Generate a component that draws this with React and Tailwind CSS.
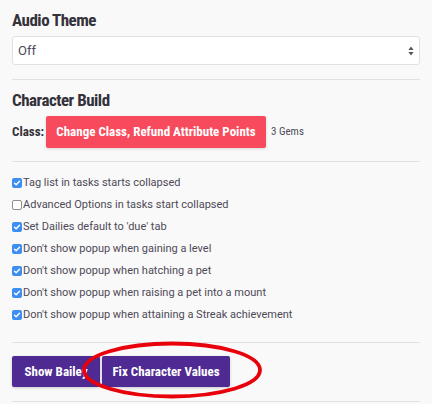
const OPTIONS = [
  { label: 'Tag list in tasks starts collapsed', checked: true },
  { label: 'Advanced Options in tasks start collapsed', checked: false },
  { label: "Set Dailies default to 'due' tab", checked: true },
  { label: "Don't show popup when gaining a level", checked: true },
  { label: "Don't show popup when hatching a pet", checked: true },
  { label: "Don't show popup when raising a pet into a mount", checked: true },
  { label: "Don't show popup when attaining a Streak achievement", checked: true },
]

function Check({ checked }) {
  if (!checked) {
    return <span className="inline-block w-[10px] h-[10px] rounded-[2px] border border-[#8e8e93] bg-white shrink-0" />
  }
  return (
    <span className="inline-flex items-center justify-center w-[10px] h-[10px] rounded-[2px] bg-[#3d8ef3] shrink-0">
      <svg width="8" height="8" viewBox="0 0 8 8">
        <path d="M1.5 4.2 L3.2 5.8 L6.5 2.2" fill="none" stroke="#fff" strokeWidth="1.4" strokeLinecap="round" strokeLinejoin="round" />
      </svg>
    </span>
  )
}

export default function App() {
  return (
    <div
      className="relative w-[432px] h-[404px] overflow-hidden bg-[#f9f9f9] px-3 pt-[9px] text-[#4e4a57]"
      style={{ fontFamily: 'Roboto, "Liberation Sans", sans-serif' }}
    >
      <h3 className="text-[17px] leading-[22px] font-bold font-stretch-condensed tracking-[-0.5px] text-[#34313a]">Audio Theme</h3>
      <div className="mt-[5px] h-[29px] flex items-center justify-between rounded-[3px] border border-[#e1e0e3] bg-white pl-[5px] pr-[5px]">
        <span className="text-[13px]">Off</span>
        <svg width="6" height="10" viewBox="0 0 6 10">
          <path d="M3 0.5 L5.6 4 L0.4 4 Z" fill="#555" />
          <path d="M3 9.5 L5.6 6 L0.4 6 Z" fill="#555" />
        </svg>
      </div>
      <div className="mt-[14px] border-t border-[#e1e0e3]" />

      <h3 className="mt-[9px] text-[17px] leading-[22px] font-bold font-stretch-condensed tracking-[-0.5px] text-[#34313a]">Character Build</h3>
      <div className="mt-[5px] flex items-center">
        <span className="text-[13px] font-bold font-stretch-condensed text-[#34313a] w-[34px]">Class:</span>
        <button className="h-[32px] w-[220px] whitespace-nowrap bg-[#f74a5c] text-white text-[13px] font-bold font-stretch-condensed shadow-[0_1px_3px_rgba(26,24,29,0.15)] rounded-[2px]">
          Change Class, Refund Attribute Points
        </button>
        <span className="ml-[5px] text-[11px] font-stretch-condensed text-[#4e4a57]">3 Gems</span>
      </div>
      <div className="mt-[13px] border-t border-[#e1e0e3]" />

      <div className="mt-[10px] flex flex-col">
        {OPTIONS.map((o) => (
          <label key={o.label} className="h-[22px] flex items-center text-[11px]">
            <Check checked={o.checked} />
            <span className="ml-[1px]">{o.label}</span>
          </label>
        ))}
      </div>
      <div className="mt-[16px] border-t border-[#e1e0e3]" />

      <div className="mt-[13px] flex gap-[2px]">
        <button className="h-[31px] w-[88px] whitespace-nowrap bg-[#4f2a93] text-white text-[13px] font-bold font-stretch-condensed shadow-[0_1px_3px_rgba(26,24,29,0.2)] rounded-[2px]">
          Show Bailey
        </button>
        <button className="h-[31px] w-[128px] whitespace-nowrap bg-[#4f2a93] text-white text-[13px] font-bold font-stretch-condensed shadow-[0_1px_3px_rgba(26,24,29,0.2)] rounded-[2px]">
          Fix Character Values
        </button>
      </div>
      <div className="mt-[14px] border-t border-[#e1e0e3]" />

      <svg className="absolute left-0 top-0 pointer-events-none" width="432" height="404">
        <ellipse cx="172" cy="370" rx="88" ry="26.5" fill="none" stroke="#e8000b" strokeWidth="3.8" />
      </svg>
    </div>
  )
}
